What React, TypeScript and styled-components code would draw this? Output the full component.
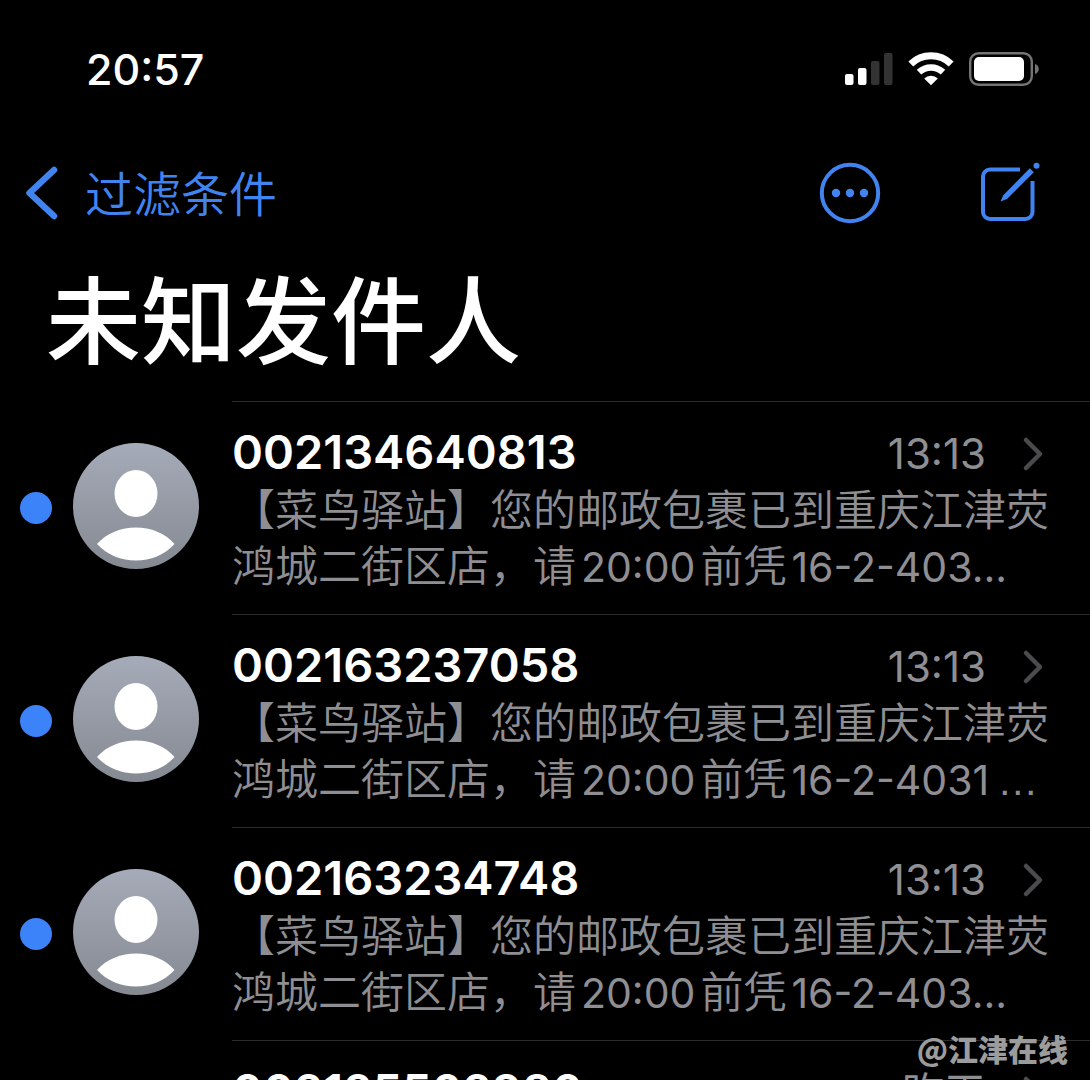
import React from "react";
import styled, { createGlobalStyle } from "styled-components";

const sans = `Inter, "Noto Sans CJK SC", sans-serif`;
const blue = "#4184f0";

const GlobalStyle = createGlobalStyle`
  html, body, #root { height: 100%; }
  body { margin: 0; background: #000; overflow: hidden; }
  * { box-sizing: border-box; }
`;

const Screen = styled.main`
  position: relative;
  height: 100%;
  overflow: hidden;
  background: #000;
  color: #fff;
  font-family: ${sans};
`;

const StatusBar = styled.div`
  display: flex;
  align-items: center;
  justify-content: space-between;
  height: 138px;
  padding: 0 50px 0 86px;
`;

const Clock = styled.time`
  font-size: 43px;
  line-height: 48px;
  font-weight: 500;
`;

const StatusIcons = styled.div`
  display: flex;
  align-items: center;
  gap: 15px;
  svg { display: block; }
`;

const NavBar = styled.nav`
  display: flex;
  align-items: center;
  justify-content: space-between;
  height: 110px;
  padding: 0 49px 0 24px;
`;

const BackLink = styled.a`
  display: flex;
  align-items: center;
  gap: 27px;
  color: ${blue};
  font-size: 48px;
  line-height: 56px;
  font-weight: 350;
  text-decoration: none;
  span { padding-top: 4px; }
`;

const NavActions = styled.div`
  display: flex;
  align-items: center;
  gap: 98px;
`;

const IconButton = styled.button`
  display: block;
  padding: 0;
  border: 0;
  background: none;
  color: ${blue};
  svg { display: block; }
`;

const Title = styled.h1`
  margin: 0;
  padding: 21px 46px 0;
  height: 153px;
  font-size: 95px;
  line-height: 108px;
  font-weight: 500;
`;

const List = styled.ul`
  margin: 0;
  padding: 0;
  list-style: none;
`;

const Row = styled.li`
  display: flex;
`;

const RowSide = styled.div`
  display: flex;
  flex: none;
  align-items: center;
  gap: 21px;
  width: 232px;
  padding-left: 20px;
`;

const Unread = styled.span`
  width: 32px;
  height: 32px;
  border-radius: 50%;
  background: #3c82f8;
`;

const Avatar = styled.svg`
  display: block;
  width: 126px;
  height: 126px;
  margin-bottom: 4px;
`;

const Message = styled.article`
  flex: 1;
  min-width: 0;
  height: 213px;
  padding: 24px 32px 0 0;
  border-top: 1px solid #2c2c2e;
`;

const Heading = styled.div`
  display: flex;
  align-items: flex-start;
  padding-right: 14px;
`;

const Sender = styled.h2`
  flex: 1;
  margin: 0;
  font-size: 47px;
  line-height: 52px;
  font-weight: 600;
`;

const Time = styled.time`
  margin-right: 36px;
  color: #8e8e93;
  font-size: 42px;
  line-height: 56px;
  font-weight: 400;
`;

const Chevron = styled.svg`
  align-self: center;
`;

const Snippet = styled.p`
  margin: 0;
  color: #8e8e93;
  font-size: 43px;
  line-height: 56px;
  font-weight: 350;
  white-space: nowrap;
`;

const Latin = styled.span`
  margin: 0 5px;
  font-size: 41px;
  font-weight: 400;
`;

const WideDots = styled.span`
  margin-left: 8px;
  font-family: "Liberation Sans", sans-serif;
`;

const Watermark = styled.div`
  position: absolute;
  right: 22px;
  bottom: 10px;
  color: #9c9c9c;
  font-family: "Noto Sans CJK SC", sans-serif;
  font-size: 30px;
  line-height: 44px;
  font-weight: 900;
`;

type Item = { sender: string; time: string; code: string; wide?: boolean };

const items: Item[] = [
  { sender: "002134640813", time: "13:13", code: "16-2-403" },
  { sender: "002163237058", time: "13:13", code: "16-2-4031", wide: true },
  { sender: "002163234748", time: "13:13", code: "16-2-403" },
  { sender: "002125502980", time: "昨天", code: "16-2-403" },
];

const Signal = () => (
  <svg width="48" height="32" viewBox="0 0 48 32" fill="#fff">
    <rect x="0" y="21" width="8.5" height="11" rx="2" />
    <rect x="13" y="15" width="8.5" height="17" rx="2" />
    <rect x="26" y="8" width="8.5" height="24" rx="2" fill="#333" />
    <rect x="39" y="0" width="8.5" height="32" rx="2" fill="#333" />
  </svg>
);

const Wifi = () => (
  <svg width="46" height="34" viewBox="0 0 46 34" fill="none" stroke="#fff">
    <path d="M2.8 11.9 A29 29 0 0 1 43.2 11.9" strokeWidth="7" />
    <path d="M11 20.2 A17.5 17.5 0 0 1 35 20.2" strokeWidth="6.5" />
    <path d="M16.2 26.4 A9.8 9.8 0 0 1 29.8 26.4 L23 33.2 Z" fill="#fff" stroke="none" />
  </svg>
);

const Battery = () => (
  <svg width="71" height="34" viewBox="0 0 71 34">
    <rect x="1.2" y="1.2" width="61.6" height="31.6" rx="8.5" fill="none" stroke="#747474" strokeWidth="2.4" />
    <rect x="5" y="5" width="50" height="24" rx="5" fill="#fff" />
    <path d="M66 12 C71 13.5 71 20.5 66 22 Z" fill="#747474" />
  </svg>
);

const Person = () => (
  <Avatar viewBox="0 0 126 126" aria-hidden="true">
    <defs>
      <linearGradient id="avatarFill" x1="0" y1="0" x2="0" y2="1">
        <stop offset="0" stopColor="#a6abb9" />
        <stop offset="1" stopColor="#858991" />
      </linearGradient>
    </defs>
    <circle cx="63" cy="63" r="63" fill="url(#avatarFill)" />
    <ellipse cx="63" cy="50.5" rx="21.5" ry="23.5" fill="#fff" />
    <path d="M24 101 C43 79 83 79 101.5 101 C82 123 44 123 24 101 Z" fill="#fff" />
  </Avatar>
);

export default function App() {
  return (
    <Screen>
      <GlobalStyle />
      <StatusBar>
        <Clock>20:57</Clock>
        <StatusIcons>
          <Signal />
          <Wifi />
          <Battery />
        </StatusIcons>
      </StatusBar>
      <NavBar>
        <BackLink href="#filters">
          <svg width="34" height="54" viewBox="0 0 34 54" fill="none" stroke="currentColor" strokeWidth="6.5" strokeLinecap="round" strokeLinejoin="round">
            <path d="M30 4 L5.5 27 L30 50" />
          </svg>
          <span>过滤条件</span>
        </BackLink>
        <NavActions>
          <IconButton type="button" aria-label="更多">
            <svg width="62" height="62" viewBox="0 0 62 62">
              <circle cx="31" cy="31" r="28.2" fill="none" stroke="currentColor" strokeWidth="4" />
              <g fill="currentColor">
                <circle cx="17" cy="31" r="4.2" />
                <circle cx="31" cy="31" r="4.2" />
                <circle cx="45" cy="31" r="4.2" />
              </g>
            </svg>
          </IconButton>
          <IconButton type="button" aria-label="新信息">
            <svg width="62" height="62" viewBox="0 0 62 62" fill="none" stroke="currentColor" strokeWidth="4">
              <path d="M41 7.5 H11 A7 7 0 0 0 4 14.5 V50 A7 7 0 0 0 11 57 H46.5 A7 7 0 0 0 53.5 50 V19" />
              <path d="M21.5 39.5 L24.2 33.3 L50.8 6.3 L54.8 10.2 L28 37 Z" fill="currentColor" stroke="none" />
              <circle cx="57.5" cy="3.8" r="3" fill="currentColor" stroke="none" />
            </svg>
          </IconButton>
        </NavActions>
      </NavBar>
      <Title>未知发件人</Title>
      <List>
        {items.map((item) => (
          <Row key={item.sender}>
            <RowSide>
              <Unread />
              <Person />
            </RowSide>
            <Message>
              <Heading>
                <Sender>{item.sender}</Sender>
                <Time>{item.time}</Time>
                <Chevron width="22" height="36" viewBox="0 0 22 36" fill="none" stroke="#4b4b4e" strokeWidth="4.5" strokeLinecap="round" strokeLinejoin="round">
                  <path d="M4 4 L18 18 L4 32" />
                </Chevron>
              </Heading>
              <Snippet>
                【菜鸟驿站】您的邮政包裹已到重庆江津荧
                <br />
                鸿城二街区店，请<Latin>20:00</Latin>前凭
                <Latin>
                  {item.code}
                  {item.wide ? <WideDots>…</WideDots> : "..."}
                </Latin>
              </Snippet>
            </Message>
          </Row>
        ))}
      </List>
      <Watermark>@江津在线</Watermark>
    </Screen>
  );
}
